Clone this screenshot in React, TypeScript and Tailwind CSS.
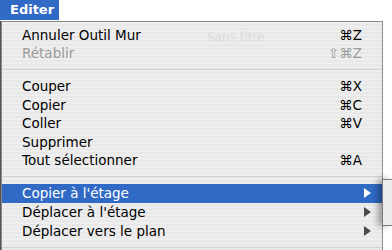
import React from "react";

type Item =
  | { kind: "item"; label: string; shortcut?: string; disabled?: boolean; active?: boolean; submenu?: boolean; h?: string }
  | { kind: "sep"; h: string };

const items: Item[] = [
  { kind: "item", label: "Annuler Outil Mur", shortcut: "⌘Z" },
  { kind: "item", label: "Rétablir", shortcut: "⇧⌘Z", disabled: true },
  { kind: "sep", h: "h-[14.5px]" },
  { kind: "item", label: "Couper", shortcut: "⌘X" },
  { kind: "item", label: "Copier", shortcut: "⌘C" },
  { kind: "item", label: "Coller", shortcut: "⌘V" },
  { kind: "item", label: "Supprimer" },
  { kind: "item", label: "Tout sélectionner", shortcut: "⌘A" },
  { kind: "sep", h: "h-[14px]" },
  { kind: "item", label: "Copier à l'étage", submenu: true, active: true, h: "h-[19px]" },
  { kind: "item", label: "Déplacer à l'étage", submenu: true, h: "h-[19px]" },
  { kind: "item", label: "Déplacer vers le plan", submenu: true, h: "h-[19px]" },
  { kind: "sep", h: "h-[13px]" },
];

function Arrow({ active }: { active?: boolean }) {
  return (
    <svg width="7" height="10" viewBox="0 0 7 10" className="ml-[2px]">
      <polygon points="0,0 7,5 0,10" fill={active ? "#ffffff" : "#4a4a4a"} />
    </svg>
  );
}

export default function App() {
  return (
    <div className="relative w-[392px] h-[250px] overflow-hidden bg-white font-['DejaVu_Sans',sans-serif] text-[13.5px]">
      <div className="flex h-[21px]">
        <div className="flex w-[59px] h-[20px] items-center pl-[10px] bg-[#316ac5] text-white font-bold text-[13px]">
          Editer
        </div>
      </div>

      <div className="flex">
        <div className="w-[1px] h-[229px] bg-[#555]" />
        <div className="relative w-[382px] h-[229px] border-t border-x border-[#8a8a8a] bg-[repeating-linear-gradient(180deg,#eeeeee_0px,#eeeeee_2px,#e8e8e8_2px,#e8e8e8_4px)] pt-[3.5px]">
          <div className="absolute left-[205px] top-[6px] text-[12px] text-[#dcdcdc]">Sans titre</div>
          {items.map((it, i) =>
            it.kind === "sep" ? (
              <div key={i} className={`${it.h} flex items-center`}>
                <div className="w-full h-[1px] bg-[#d2d2d2]" />
              </div>
            ) : (
              <div
                key={i}
                className={`relative flex items-center ${it.h ?? "h-[18.5px]"} pl-[20px] ${
                  it.active ? "bg-[#316ac5] text-white" : it.disabled ? "text-[#9a9a9a]" : "text-black"
                }`}
              >
                <span className="flex-1">{it.label}</span>
                {it.shortcut && <span>{it.shortcut}</span>}
                <div className="w-[20px] flex items-center">{it.submenu && <Arrow active={it.active} />}</div>
              </div>
            )
          )}
        </div>
      </div>

      <div className="absolute left-[382px] top-[179px] w-[10px] h-[47px] border-t border-l border-b border-[#7a7a7a] bg-[#ececec] shadow-[-4px_0_6px_rgba(0,0,0,0.35)]" />
    </div>
  );
}
